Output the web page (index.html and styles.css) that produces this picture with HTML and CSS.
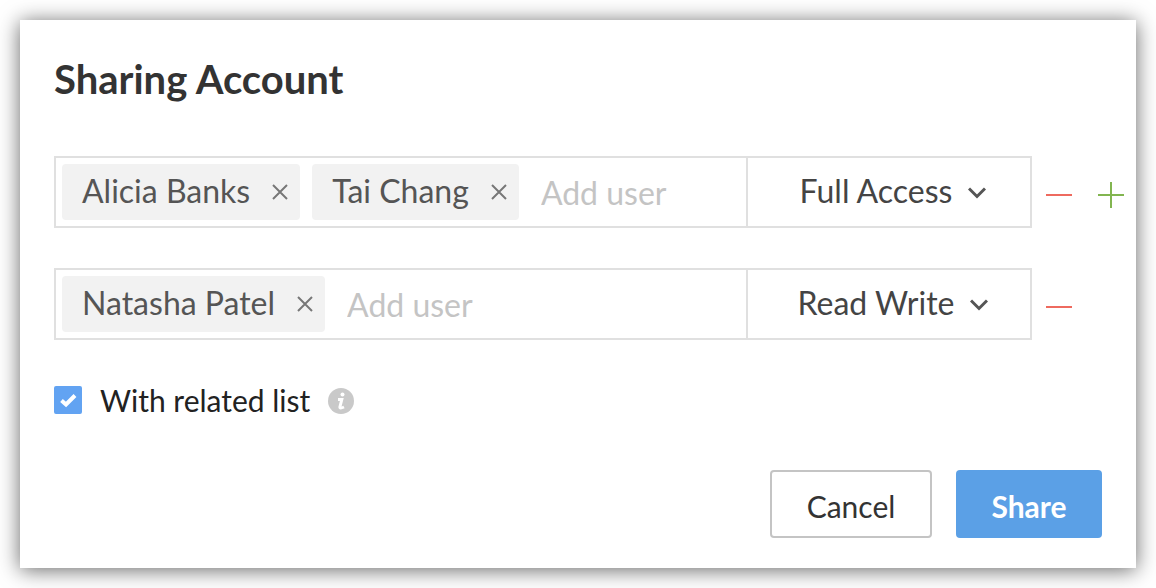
FILE: index.html
```html
<!DOCTYPE html>
<html lang="en">
  <head>
    <meta charset="utf-8">
    <title>Sharing Account</title>
    <link rel="stylesheet" href="styles.css">
  </head>
  <body>
    <form class="dialog">
      <h1>Sharing Account</h1>

      <div class="share-row">
        <div class="share-box">
          <div class="users">
            <span class="chip">Alicia Banks
              <button type="button" class="remove" aria-label="Remove Alicia Banks">
                <svg width="16" height="18" viewBox="0 0 16 18"><path d="M1 3L15 17M15 3L1 17"/></svg>
              </button>
            </span>
            <span class="chip">Tai Chang
              <button type="button" class="remove" aria-label="Remove Tai Chang">
                <svg width="16" height="18" viewBox="0 0 16 18"><path d="M1 3L15 17M15 3L1 17"/></svg>
              </button>
            </span>
            <input type="text" placeholder="Add user" aria-label="Add user">
          </div>
          <div class="access">
            <select id="access-1" aria-label="Access level">
              <option selected>Full Access</option>
              <option>Read Write</option>
              <option>Read Only</option>
            </select>
            <svg width="18" height="16" viewBox="0 0 18 16"><path d="M1 5.5L9 13.5L17 5.5"/></svg>
          </div>
        </div>
        <div class="actions">
          <button type="button" class="minus" aria-label="Remove row">
            <svg width="26" height="26" viewBox="0 0 26 26"><path d="M0 13H26"/></svg>
          </button>
          <button type="button" class="plus" aria-label="Add row">
            <svg width="26" height="26" viewBox="0 0 26 26"><path d="M0 13H26M13 0V26"/></svg>
          </button>
        </div>
      </div>

      <div class="share-row">
        <div class="share-box">
          <div class="users">
            <span class="chip">Natasha Patel
              <button type="button" class="remove" aria-label="Remove Natasha Patel">
                <svg width="16" height="18" viewBox="0 0 16 18"><path d="M1 3L15 17M15 3L1 17"/></svg>
              </button>
            </span>
            <input type="text" placeholder="Add user" aria-label="Add user">
          </div>
          <div class="access">
            <select id="access-2" aria-label="Access level">
              <option>Full Access</option>
              <option selected>Read Write</option>
              <option>Read Only</option>
            </select>
            <svg width="18" height="16" viewBox="0 0 18 16"><path d="M1 5.5L9 13.5L17 5.5"/></svg>
          </div>
        </div>
        <div class="actions">
          <button type="button" class="minus" aria-label="Remove row">
            <svg width="26" height="26" viewBox="0 0 26 26"><path d="M0 13H26"/></svg>
          </button>
        </div>
      </div>

      <div class="related">
        <span class="tick">
          <input type="checkbox" id="related" checked>
          <svg width="28" height="28" viewBox="0 0 28 28"><path d="M7.5 14.5L12 18.5L21 9.5"/></svg>
        </span>
        <label for="related">With related list</label>
        <svg class="info" width="26" height="28" viewBox="0 -2 26 28">
          <circle class="disc" cx="13" cy="13" r="13"/>
          <circle class="dot" cx="14.5" cy="6.5" r="2"/>
          <path d="M10 11.5H13.8L11.9 19Q11.6 21 16 19"/>
        </svg>
      </div>

      <div class="buttons">
        <button type="button" class="btn cancel">Cancel</button>
        <button type="submit" class="btn share">Share</button>
      </div>
    </form>
  </body>
</html>
```
FILE: styles.css
```css
* {
  box-sizing: border-box;
}

body {
  margin: 0;
  padding: 20px;
  background-color: #fff;
  font-family: Lato, "Liberation Sans", sans-serif;
  font-size: 32px;
  line-height: 40px;
  color: #222;
}

button, input, select {
  font: inherit;
  margin: 0;
}

button {
  cursor: pointer;
}

svg {
  display: block;
  fill: none;
  stroke: currentColor;
  stroke-width: 2px;
}

.dialog {
  padding: 34px 34px 30px;
  background-color: #fff;
  box-shadow: 0 2px 20px rgba(0, 0, 0, 0.6);
}

h1 {
  margin: 0 0 52px;
  font-size: 40px;
  line-height: 50px;
  font-weight: 700;
  color: #333;
}

.share-row {
  display: flex;
  gap: 14px;
  margin: 0 -22px 40px 0;
}

.share-box {
  flex: 1;
  min-width: 0;
  display: flex;
  border: 2px solid #e0e0e0;
}

.users {
  flex: 1;
  min-width: 0;
  display: flex;
  gap: 12px;
  padding: 6px;
}

.chip {
  display: flex;
  align-items: center;
  gap: 22px;
  height: 56px;
  padding: 0 12px 2px 20px;
  border-radius: 4px;
  background-color: #f2f2f2;
  color: #555;
  white-space: nowrap;
}

.remove {
  padding: 0;
  border: none;
  background: none;
  color: #777;
}

.users input {
  flex: 1;
  min-width: 0;
  padding: 2px 0 0 10px;
  border: none;
  outline: none;
  background: none;
  color: #555;
}

.users input::placeholder {
  color: #c4c4c4;
  opacity: 1;
}

.access {
  width: 284px;
  display: flex;
  align-items: center;
  justify-content: center;
  gap: 16px;
  padding: 0 0 2px 8px;
  border-left: 2px solid #e0e0e0;
  color: #555;
}

.access select {
  appearance: none;
  field-sizing: content;
  padding: 0;
  border: none;
  outline: none;
  background: none;
  color: #444;
}

.access svg {
  stroke-width: 3px;
}

.actions {
  width: 78px;
  display: flex;
  align-items: center;
  gap: 26px;
  padding-top: 6px;
}

.actions button {
  padding: 0;
  border: none;
  background: none;
}

.actions .minus {
  color: #ee6a5f;
}

.actions .plus {
  color: #82b550;
}

.related {
  display: flex;
  align-items: center;
  gap: 18px;
  margin-bottom: 50px;
  font-size: 30px;
}

.tick {
  position: relative;
}

.tick input {
  display: block;
  appearance: none;
  width: 28px;
  height: 28px;
  border: 2px solid #c4c4c4;
  border-radius: 2px;
}

.tick input:checked {
  border-color: #62a3f2;
  background-color: #62a3f2;
}

.tick svg {
  position: absolute;
  top: 0;
  left: 0;
  color: #fff;
  stroke-width: 4px;
  pointer-events: none;
}

.info {
  color: #fff;
  stroke-width: 3px;
}

.info .disc {
  fill: #c9c9c9;
  stroke: none;
}

.info .dot {
  fill: #fff;
  stroke: none;
}

.buttons {
  display: flex;
  justify-content: flex-end;
  gap: 24px;
}

.btn {
  height: 68px;
  padding: 4px 0 0;
  border-radius: 4px;
  font-size: 30px;
}

.cancel {
  width: 162px;
  border: 2px solid #c4c4c4;
  background-color: #fff;
  color: #333;
}

.share {
  width: 146px;
  border: none;
  background-color: #5ba0e6;
  color: #fff;
  font-weight: 700;
}
```
